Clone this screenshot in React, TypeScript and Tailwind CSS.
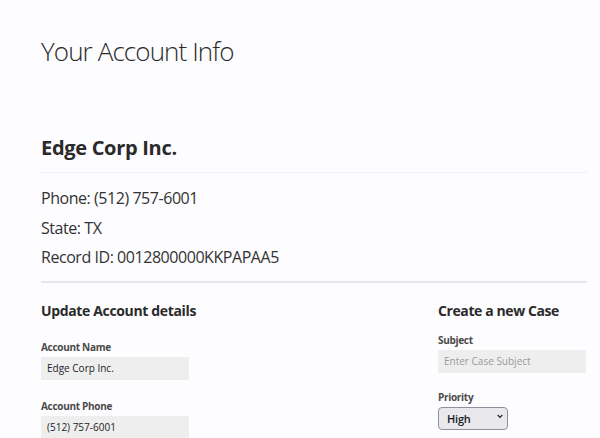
import React from "react";

const font = { fontFamily: '"Open Sans", "Noto Sans", sans-serif' };

function Field({ label, value, placeholder }: { label: string; value?: string; placeholder?: string }) {
  return (
    <div className="flex flex-col">
      <label className="h-[20px] text-[10px] leading-[20px] font-bold tracking-[-0.3px] text-[#4a4a4a]">{label}</label>
      <input
        readOnly
        defaultValue={value}
        placeholder={placeholder}
        className="h-[23px] w-[148px] bg-[#eeeeee] px-[6px] text-[10px] text-[#222] placeholder:text-[#9a9a9a] outline-none"
      />
    </div>
  );
}

export default function App() {
  return (
    <div className="min-h-[438px] w-full bg-[#fdfcfe] text-[#2a2a2a]" style={font}>
      <div className="px-[41px]">
        <h1 className="pt-[33px] h-[120px] text-[26px] leading-[36px] font-light tracking-[-0.9px]">Your Account Info</h1>

        <h2 className="h-[53px] pt-[15px] text-[20px] leading-[26px] font-bold tracking-[-0.3px] w-[546px] border-b border-[#f1f0f2]">
          Edge Corp Inc.
        </h2>

        <div className="pt-[11px] text-[16px] leading-[29.5px] text-[#333] tracking-[-0.45px]">
          <p>Phone: (512) 757-6001</p>
          <p>State: TX</p>
          <p>Record ID: 0012800000KKPAPAA5</p>
        </div>

        <div className="mt-[8px] w-[546px] h-[2px] bg-[#e6e5e7]" />

        <div className="flex justify-between w-[546px] pt-[17px]">
          <div className="flex flex-col">
            <h3 className="h-[22px] text-[14px] leading-[22px] font-bold tracking-[-0.35px]">Update Account details</h3>
            <div className="flex flex-col gap-[16px] pt-[15px]">
              <Field label="Account Name" value="Edge Corp Inc." />
              <Field label="Account Phone" value="(512) 757-6001" />
            </div>
          </div>
          <div className="flex flex-col w-[149px]">
            <h3 className="h-[22px] text-[14px] leading-[22px] font-bold tracking-[-0.4px] whitespace-nowrap">Create a new Case</h3>
            <div className="flex flex-col gap-[14px] pt-[8px]">
              <Field label="Subject" placeholder="Enter Case Subject" />
              <div className="flex flex-col">
                <label className="h-[20px] text-[10px] leading-[20px] font-bold tracking-[-0.3px] text-[#4a4a4a]">Priority</label>
                <div className="relative -mt-[2px] w-[70px] h-[23px]">
                  <select
                    defaultValue="High"
                    className="appearance-none w-full h-full rounded-[4px] border border-[#8f8f9d] bg-[#e9e9ed] pl-[8px] text-[11px] font-semibold tracking-[-0.2px] text-[#1a1a1a] outline-none"
                  >
                    <option>High</option>
                    <option>Medium</option>
                    <option>Low</option>
                  </select>
                  <svg className="pointer-events-none absolute right-[5px] top-[9px]" width="6" height="5" viewBox="0 0 6 5">
                    <path d="M0.7 1 L3 3.4 L5.3 1" fill="none" stroke="#222" strokeWidth="1.2" />
                  </svg>
                </div>
              </div>
            </div>
          </div>
        </div>
      </div>
    </div>
  );
}
